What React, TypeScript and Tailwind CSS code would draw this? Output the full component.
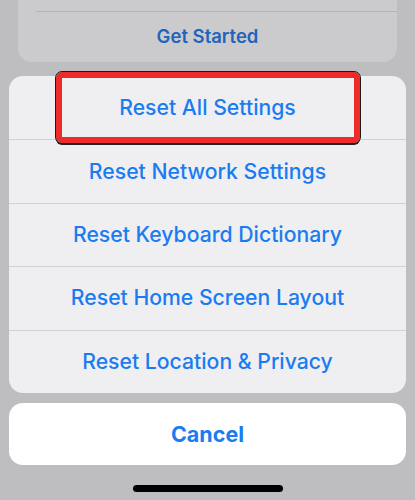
const actions = [
  "Reset All Settings",
  "Reset Network Settings",
  "Reset Keyboard Dictionary",
  "Reset Home Screen Layout",
  "Reset Location & Privacy",
];

const font = { fontFamily: "Inter, 'Noto Sans', sans-serif" };

const App = () => {
  return (
    <div className="w-[415px] h-[500px] overflow-hidden bg-[#bebec0] flex flex-col" style={font}>
      {/* dimmed card behind the sheet */}
      <div className="mx-[18px] h-[62px] shrink-0 bg-[#cbcbcd] rounded-b-[14px] flex flex-col">
        <div className="h-[12px] ml-[18px] border-b border-[#b3b3b5]" />
        <div className="flex-1 flex items-center justify-center text-[18.5px] font-semibold text-[#2164bb]">
          Get Started
        </div>
      </div>

      {/* action sheet */}
      <div className="relative mx-[9px] mt-[14px] bg-[#efeff1] rounded-[14px] flex flex-col">
        {actions.map((label, i) => (
          <div
            key={label}
            className={
              "h-[63.4px] flex items-center justify-center text-[21.2px] font-medium text-[#1a7cf0] " +
              (i > 0 ? "border-t border-[#d2d2d4]" : "")
            }
          >
            {label}
          </div>
        ))}
        <div className="absolute left-[47px] top-[-4px] w-[304px] h-[71px] rounded-[6px] border-[6px] border-[#ee2a2a] outline outline-1 outline-[#1a1a1a] shadow-[0_2px_0_#222]" />
      </div>

      {/* cancel */}
      <div className="mx-[9px] mt-[10px] h-[62px] shrink-0 bg-white rounded-[14px] flex items-center justify-center text-[21.5px] font-bold text-[#1a7cf0]">
        Cancel
      </div>

      <div className="mt-[20px] mx-auto w-[150px] h-[7px] rounded-full bg-black" />
    </div>
  );
};

export default App;
